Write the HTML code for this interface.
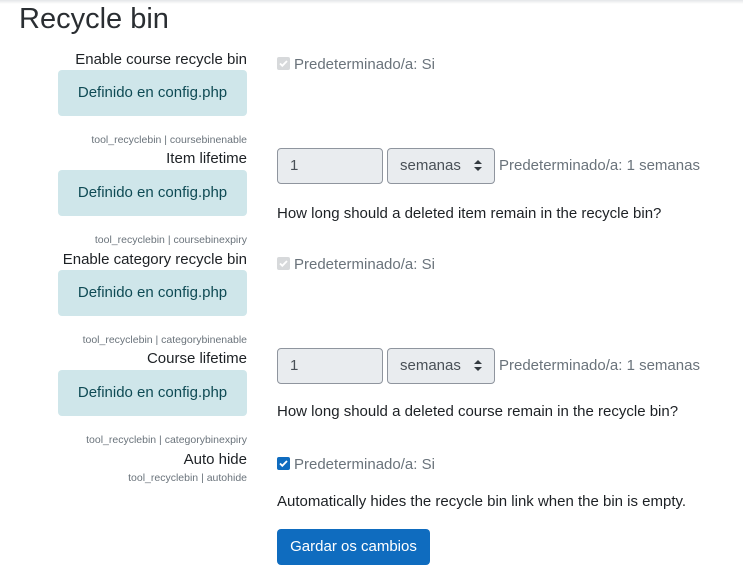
<!DOCTYPE html>
<html><head><style>
*{margin:0;padding:0;box-sizing:border-box}
body{width:743px;height:566px;overflow:hidden;background:#fff;font-family:"Liberation Sans",sans-serif;color:#1d2125;position:relative}
.a{position:absolute;white-space:nowrap}
.bar{position:absolute;left:0;top:0;width:743px;height:4px;background:linear-gradient(#e4e6e8,#fff)}
h1{position:absolute;left:19px;top:3px;font-size:29px;font-weight:normal;color:#2a2e32;font-family:"Liberation Sans",sans-serif}
.lbl{right:496px;font-size:15px;line-height:18px}
.sm{right:496px;font-size:10.5px;color:#6a737b;line-height:12px}
.box{position:absolute;left:58px;width:189px;height:46px;background:#cfe6ea;border-radius:4px;color:#0e4a54;font-size:15px;text-align:center;line-height:46px}
.cb{position:absolute;width:13px;height:13px;border-radius:2px;background:#d7d9db;left:277px}
.cb svg{position:absolute;left:1px;top:1px}
.def{left:294px;font-size:15px;color:#6a737b;line-height:18px}
.in{position:absolute;left:277px;width:106px;height:36px;background:#e9ecef;border:1px solid #8f959e;border-radius:4px;font-size:15px;line-height:34px;padding-left:12px;color:#495057}
.sel{position:absolute;left:387px;width:108px;height:36px;background:#e9ecef;border:1px solid #8f959e;border-radius:4px;font-size:15px;line-height:34px;padding-left:12px;color:#495057}
.desc{left:277px;font-size:15px;line-height:18px}
.btn{position:absolute;left:277px;top:529px;width:153px;height:36px;background:#0f6cbf;border-radius:4px;color:#fff;font-size:15px;line-height:36px;text-align:center}
</style></head><body>
<div class="bar"></div>
<h1>Recycle bin</h1>

<div class="a lbl" style="top:51px">Enable course recycle bin</div>
<div class="box" style="top:70px">Definido en config.php</div>
<div class="cb" style="top:57px"><svg width="11" height="11" viewBox="0 0 11 11"><path d="M2 5.5l2.3 2.3L9 3" stroke="#fff" stroke-width="1.8" fill="none"/></svg></div>
<div class="a def" style="top:56px">Predeterminado/a: Si</div>
<div class="a sm" style="top:134px">tool_recyclebin | coursebinenable</div>

<div class="a lbl" style="top:150px">Item lifetime</div>
<div class="box" style="top:170px">Definido en config.php</div>
<div class="in" style="top:148px">1</div>
<div class="sel" style="top:148px">semanas</div>
<div class="a def" style="left:499px;top:157px">Predeterminado/a: 1 semanas</div>
<div class="a desc" style="top:205px">How long should a deleted item remain in the recycle bin?</div>
<div class="a sm" style="top:234px">tool_recyclebin | coursebinexpiry</div>

<div class="a lbl" style="top:251px">Enable category recycle bin</div>
<div class="box" style="top:270px">Definido en config.php</div>
<div class="cb" style="top:257px"><svg width="11" height="11" viewBox="0 0 11 11"><path d="M2 5.5l2.3 2.3L9 3" stroke="#fff" stroke-width="1.8" fill="none"/></svg></div>
<div class="a def" style="top:256px">Predeterminado/a: Si</div>
<div class="a sm" style="top:334px">tool_recyclebin | categorybinenable</div>

<div class="a lbl" style="top:350px">Course lifetime</div>
<div class="box" style="top:370px">Definido en config.php</div>
<div class="in" style="top:348px">1</div>
<div class="sel" style="top:348px">semanas</div>
<div class="a def" style="left:499px;top:357px">Predeterminado/a: 1 semanas</div>
<div class="a desc" style="top:403px">How long should a deleted course remain in the recycle bin?</div>
<div class="a sm" style="top:434px">tool_recyclebin | categorybinexpiry</div>

<div class="a lbl" style="top:451px">Auto hide</div>
<div class="a sm" style="top:472px">tool_recyclebin | autohide</div>
<div class="cb" style="top:457px;background:#0f6cbf"><svg width="11" height="11" viewBox="0 0 11 11"><path d="M2 5.5l2.3 2.3L9 3" stroke="#fff" stroke-width="1.8" fill="none"/></svg></div>
<div class="a def" style="top:456px">Predeterminado/a: Si</div>
<div class="a desc" style="top:493px">Automatically hides the recycle bin link when the bin is empty.</div>
<div class="btn">Gardar os cambios</div>

<svg class="a" style="left:474px;top:160px" width="8" height="11" viewBox="0 0 8 11"><path d="M4 0L8 4H0zM4 11L0 7h8z" fill="#343a40"/></svg>
<svg class="a" style="left:474px;top:360px" width="8" height="11" viewBox="0 0 8 11"><path d="M4 0L8 4H0zM4 11L0 7h8z" fill="#343a40"/></svg>
</body></html>
